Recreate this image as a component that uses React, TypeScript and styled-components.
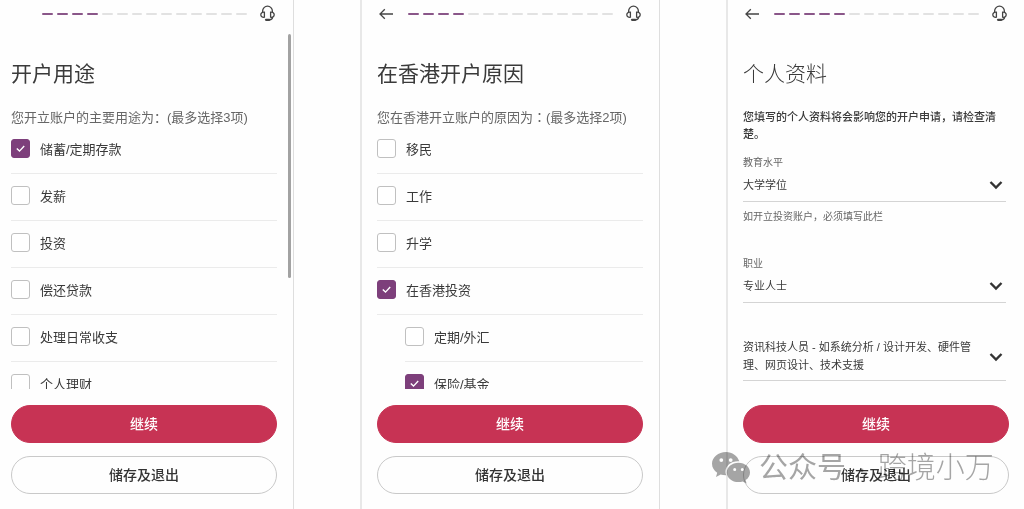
import React from "react";
import styled, { createGlobalStyle } from "styled-components";

const GlobalStyle = createGlobalStyle`
  *, *::before, *::after { box-sizing: border-box; }
  body {
    margin: 0;
    background: #fefefe;
    color: #3a3a3a;
    font-family: "Liberation Sans", "Noto Sans CJK SC", sans-serif;
  }
  button, select, input { font: inherit; color: inherit; }
`;

const Page = styled.main`
  display: grid;
  grid-template-columns: 294fr 300fr 298fr;
  grid-template-rows: minmax(0, 1fr);
  gap: 66px;
  height: 100vh;
  overflow: hidden;
`;

const Screen = styled.section<{ $first?: boolean; $last?: boolean }>`
  position: relative;
  display: flex;
  flex-direction: column;
  min-width: 0;
  padding: 0 ${(p) => (p.$last ? 15 : 16)}px 15px ${(p) => (p.$first ? 11 : 15)}px;
  border-left: ${(p) => (p.$first ? "0" : "2px solid #e8e8e8")};
  border-right: ${(p) => (p.$last ? "0" : "1px solid #dedede")};
`;

const TopBar = styled.header`
  display: flex;
  align-items: center;
  height: 27px;
  flex: none;
  padding-right: 2px;
`;

const IconButton = styled.button`
  display: flex;
  padding: 0;
  border: 0;
  background: none;
  color: #444;
`;

const BackSlot = styled.div`
  flex: none;
  width: 31px;
  padding-left: 2px;
`;

const Steps = styled.div`
  display: flex;
  flex: 1;
  gap: 4px;
  margin-right: 13px;
`;

const Step = styled.span<{ $done: boolean }>`
  flex: 1;
  height: 2px;
  border-radius: 1px;
  background: ${(p) => (p.$done ? "#8a5689" : "#e2e2e2")};
`;

const Title = styled.h1<{ $light?: boolean }>`
  flex: none;
  margin: 32px 0 0;
  font-size: 21px;
  line-height: 30px;
  font-weight: ${(p) => (p.$light ? 300 : 400)};
`;

const Legend = styled.p`
  flex: none;
  margin: 19px 0 0;
  font-size: 13px;
  line-height: 19px;
  color: #666;
  white-space: nowrap;
  &:lang(zh-Hant) {
    font-family: "Liberation Sans", "Noto Sans CJK TC", sans-serif;
  }
`;

const Options = styled.div`
  flex: 1;
  min-height: 0;
  overflow: hidden;
`;

const Option = styled.label<{ $nested?: boolean }>`
  display: flex;
  align-items: center;
  gap: 10px;
  height: 47px;
  padding-bottom: 3px;
  margin-left: ${(p) => (p.$nested ? 28 : 0)}px;
  border-bottom: 1px solid #ebebeb;
  font-size: 13px;
`;

const Box = styled.input`
  appearance: none;
  flex: none;
  width: 19px;
  height: 19px;
  margin: 0;
  border: 1px solid #c0c0c0;
  border-radius: 3px;
  background: #fff;
  &:checked {
    border-color: #7d3f7b;
    background: #7d3f7b;
  }
`;

const BoxWrap = styled.span`
  position: relative;
  display: flex;
`;

const Tick = styled.svg`
  position: absolute;
  inset: 0;
  pointer-events: none;
`;

const Actions = styled.div`
  display: grid;
  gap: 13px;
  flex: none;
  padding-top: 16px;
`;

const Pill = styled.button<{ $primary?: boolean }>`
  height: 38px;
  padding: 0 0 2px;
  border: 1px solid ${(p) => (p.$primary ? "#c73354" : "#c9c9c9")};
  border-radius: 19px;
  background: ${(p) => (p.$primary ? "#c73354" : "#fefefe")};
  color: ${(p) => (p.$primary ? "#fff" : "#333")};
  font-family: "Noto Sans CJK SC", sans-serif;
  font-size: 14px;
  font-weight: 500;
`;

const ScrollThumb = styled.div`
  position: absolute;
  top: 34px;
  right: 2px;
  width: 3px;
  height: 244px;
  border-radius: 2px;
  background: #a2a2a2;
`;

const Notice = styled.p`
  margin: 19px 0 0;
  font-family: "Noto Sans CJK SC", sans-serif;
  font-size: 11px;
  line-height: 17px;
  font-weight: 500;
`;

const Form = styled.form`
  flex: 1;
  min-height: 0;
  margin-right: 3px;
`;

const Field = styled.div<{ $gap: number }>`
  position: relative;
  margin-top: ${(p) => p.$gap}px;
  border-bottom: 1px solid #d4d4d4;
`;

const FieldLabel = styled.label`
  display: block;
  font-size: 10px;
  line-height: 16px;
  color: #666;
`;

const Select = styled.select<{ $wrap?: boolean }>`
  appearance: none;
  display: block;
  width: 100%;
  margin: 0;
  padding: ${(p) => (p.$wrap ? "0 28px 6px 0" : "5px 28px 7px 0")};
  border: 0;
  border-radius: 0;
  background: none;
  font-size: 11px;
  line-height: 18px;
  white-space: ${(p) => (p.$wrap ? "pre-wrap" : "nowrap")};
`;

const Chevron = styled.svg<{ $wrap?: boolean }>`
  position: absolute;
  right: 3px;
  bottom: ${(p) => (p.$wrap ? 18 : 11)}px;
  pointer-events: none;
`;

const Hint = styled.p`
  margin: 7px 0 0;
  font-size: 10px;
  line-height: 16px;
  color: #666;
`;

const Watermark = styled.div`
  position: absolute;
  left: -16px;
  bottom: 20px;
  display: flex;
  align-items: center;
  gap: 8px;
  color: #888;
  opacity: 0.75;
  mix-blend-mode: multiply;
  font-size: 29px;
  line-height: 42px;
  font-weight: 300;
  white-space: pre;
  pointer-events: none;
  b { font-weight: 400; }
  i { padding: 0 3px; font-style: normal; }
`;

const BackIcon = () => (
  <svg width="15" height="12" viewBox="0 0 15 12" fill="none" stroke="currentColor" strokeWidth="1.3">
    <path d="M14 6H1.2M5.8 1.2 1 6l4.800 4.800" />
  </svg>
);

const HeadsetIcon = () => (
  <svg width="15" height="17" viewBox="0 0 15 17" fill="none" stroke="currentColor" strokeWidth="1.3">
    <path d="M2.600 7.300V6.200a4.900 5 0 0 1 9.800 0v1.100" />
    <path d="M4.400 7.200v5C2.300 12.600 .8 11.400 .8 9.700S2.300 6.800 4.400 7.200ZM10.600 7.200v5c2.100.4 3.600-.8 3.600-2.500s-1.500-2.900-3.600-2.500Z" />
    <path d="M12.600 12c0 1.800-1.300 2.800-3.300 2.800" />
    <path d="M6 14.800h3.300" strokeWidth="2.200" strokeLinecap="round" />
  </svg>
);

const WeChatIcon = () => (
  <svg width="39" height="32" viewBox="0 0 39 32">
    <path
      fill="#888"
      fillRule="evenodd"
      d="M14 0C6.300 0 0 5.200 0 11.700c0 3.700 2 6.900 5.200 9L4 25l4.700-2.500c1.500.5 3.200.8 5 .8h.6A9.600 9.600 0 0 1 13.500 20c0-6 5.400-10.700 12.300-10.700h1.500C25.600 4 20.300 0 14 0ZM9.300 6.200a1.900 1.900 0 1 1 0 3.800 1.900 1.900 0 0 1 0-3.800Zm9.400 0a1.900 1.900 0 1 1 0 3.800 1.900 1.900 0 0 1 0-3.800Z"
    />
    <path
      fill="#888"
      fillRule="evenodd"
      d="M26.500 10.700c-6.500 0-11.700 4.300-11.700 9.700s5.200 9.700 11.700 9.700c1.500 0 2.900-.2 4.200-.6l3.900 2.100-1-3.500c2.700-1.800 4.400-4.600 4.400-7.700 0-5.400-5-9.700-11.500-9.700Zm-3.800 5.300a1.500 1.500 0 1 1 0 3 1.500 1.500 0 0 1 0-3Zm7.600 0a1.500 1.500 0 1 1 0 3 1.500 1.500 0 0 1 0-3Z"
    />
  </svg>
);

function Header({ done, back }: { done: number; back?: boolean }) {
  return (
    <TopBar>
      <BackSlot>
        {back && (
          <IconButton type="button" aria-label="返回">
            <BackIcon />
          </IconButton>
        )}
      </BackSlot>
      <Steps>
        {Array.from({ length: 14 }, (_, i) => (
          <Step key={i} $done={i < done} />
        ))}
      </Steps>
      <IconButton type="button" aria-label="客服">
        <HeadsetIcon />
      </IconButton>
    </TopBar>
  );
}

function CheckOption({ label, checked, nested }: { label: string; checked?: boolean; nested?: boolean }) {
  const [on, setOn] = React.useState(!!checked);
  return (
    <Option $nested={nested}>
      <BoxWrap>
        <Box type="checkbox" checked={on} onChange={(e) => setOn(e.target.checked)} />
        {on && (
          <Tick width="19" height="19" viewBox="0 0 19 19" fill="none" stroke="#fff" strokeWidth="1.400">
            <path d="m5.800 9.500 2.700 2.600 4.700-5.100" />
          </Tick>
        )}
      </BoxWrap>
      {label}
    </Option>
  );
}

function Dropdown({ id, label, value, gap, wrap }: { id: string; label?: string; value: string; gap: number; wrap?: boolean }) {
  return (
    <Field $gap={gap}>
      {label && <FieldLabel htmlFor={id}>{label}</FieldLabel>}
      <Select id={id} $wrap={wrap} aria-label={label ? undefined : "职位"}>
        <option>{value}</option>
      </Select>
      <Chevron $wrap={wrap} width="14" height="10" viewBox="0 0 14 10" fill="none" stroke="#333" strokeWidth="2.400">
        <path d="m1.500 2 5.500 5.500L12.500 2" />
      </Chevron>
    </Field>
  );
}

const Buttons = () => (
  <Actions>
    <Pill type="button" $primary>继续</Pill>
    <Pill type="button">储存及退出</Pill>
  </Actions>
);

const purposes = ["储蓄/定期存款", "发薪", "投资", "偿还贷款", "处理日常收支", "个人理财"];
const reasons = [
  { label: "移民" },
  { label: "工作" },
  { label: "升学" },
  { label: "在香港投资", checked: true },
  { label: "定期/外汇", nested: true },
  { label: "保险/基金", nested: true, checked: true },
];

export default function App() {
  return (
    <>
      <GlobalStyle />
      <Page>
        <Screen $first>
          <Header done={4} />
          <Title>开户用途</Title>
          <Legend>您开立账户的主要用途为：(最多选择3项)</Legend>
          <Options>
            {purposes.map((label, i) => (
              <CheckOption key={label} label={label} checked={i === 0} />
            ))}
          </Options>
          <Buttons />
          <ScrollThumb />
        </Screen>
        <Screen>
          <Header done={4} back />
          <Title>在香港开户原因</Title>
          <Legend lang="zh-Hant">您在香港开立账户的原因为：(最多选择2项)</Legend>
          <Options>
            {reasons.map((r) => (
              <CheckOption key={r.label} {...r} />
            ))}
          </Options>
          <Buttons />
        </Screen>
        <Screen $last>
          <Header done={5} back />
          <Title $light>个人资料</Title>
          <Form>
            <Notice>您填写的个人资料将会影响您的开户申请，请检查清楚。</Notice>
            <Dropdown id="education" label="教育水平" value="大学学位" gap={13} />
            <Hint>如开立投资账户，必须填写此栏</Hint>
            <Dropdown id="occupation" label="职业" value="专业人士" gap={31} />
            <Dropdown id="position" value="资讯科技人员 - 如系统分析 / 设计开发、硬件管理、网页设计、技术支援" gap={35} wrap />
          </Form>
          <Buttons />
          <Watermark>
            <WeChatIcon />
            <span><b>公众号</b><i> · </i>跨境小万</span>
          </Watermark>
        </Screen>
      </Page>
    </>
  );
}
